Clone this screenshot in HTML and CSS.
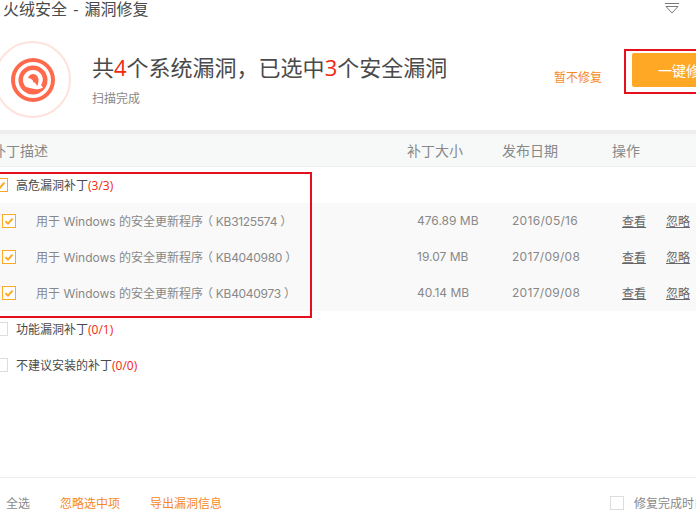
FILE: index.html
```html
<!DOCTYPE html>
<html lang="zh-CN">
<head>
  <meta charset="UTF-8" />
  <title>火绒安全 - 漏洞修复</title>
  <link rel="stylesheet" href="styles.css">
</head>
<body>
  <div class="app">
    <div class="titlebar">
      <span class="app-title">火绒安全 - 漏洞修复</span>
      <svg class="menu-icon" width="16" height="12" viewBox="0 0 16 12">
        <path d="M1 1.5H15" stroke="#777" fill="none"/>
        <path d="M2 4.5H14L8 11Z" stroke="#777" fill="none"/>
      </svg>
    </div>

    <div class="summary">
      <div class="logo">
        <svg width="44" height="44" viewBox="0 0 44 44">
          <circle cx="22" cy="22" r="22" fill="#ff6a4d"/>
          <circle cx="22" cy="22" r="18" fill="#fff"/>
          <circle cx="22" cy="22" r="14.5" fill="#ff6a4d"/>
          <path d="M22 12C16 12 12 16.500 12 22C12 25 13.500 27.500 15 29L21 30.500C25 31.500 29 31.500 32 29.500L30 27C32.500 24 32.500 18.500 29.500 15.500C27.500 13 25 12 22 12Z" fill="#fff"/>
          <path d="M17 20C18 17 20 16 22 16C25.500 16 27.500 19 27.500 22C27.500 24.500 27 26.500 26 28C25 25.500 24 24.500 22 24C22.500 22 20 20.500 17 20Z" fill="#ff6a4d"/>
        </svg>
      </div>
      <div class="summary-text">
        <h1>共<em>4</em>个系统漏洞，已选中<em>3</em>个安全漏洞</h1>
        <p>扫描完成</p>
      </div>
      <a class="skip-link">暂不修复</a>
      <button class="fix-btn">一键修复</button>
      <div class="mark mark-btn"></div>
    </div>

    <div class="table-head">
      <span class="col-name">补丁描述</span>
      <span class="col-size">补丁大小</span>
      <span class="col-date">发布日期</span>
      <span class="col-ops">操作</span>
    </div>

    <div class="list">
      <div class="group">
        <span class="check on"></span>
        <span class="group-name">高危漏洞补丁<em>(3/3)</em></span>
      </div>
      <div class="patches">
        <div class="patch">
          <span class="check on"></span>
          <span class="patch-name">用于 Windows 的安全更新程序<span class="kb">（ KB3125574 ）</span></span>
          <span class="patch-size">476.89 MB</span>
          <span class="patch-date">2016/05/16</span>
          <a class="patch-link">查看</a>
          <a class="patch-link">忽略</a>
        </div>
        <div class="patch">
          <span class="check on"></span>
          <span class="patch-name">用于 Windows 的安全更新程序<span class="kb">（ KB4040980 ）</span></span>
          <span class="patch-size">19.07 MB</span>
          <span class="patch-date">2017/09/08</span>
          <a class="patch-link">查看</a>
          <a class="patch-link">忽略</a>
        </div>
        <div class="patch">
          <span class="check on"></span>
          <span class="patch-name">用于 Windows 的安全更新程序<span class="kb">（ KB4040973 ）</span></span>
          <span class="patch-size">40.14 MB</span>
          <span class="patch-date">2017/09/08</span>
          <a class="patch-link">查看</a>
          <a class="patch-link">忽略</a>
        </div>
      </div>
      <div class="group">
        <span class="check"></span>
        <span class="group-name">功能漏洞补丁<em>(0/1)</em></span>
      </div>
      <div class="group">
        <span class="check"></span>
        <span class="group-name">不建议安装的补丁<em>(0/0)</em></span>
      </div>
      <div class="mark mark-list"></div>
    </div>

    <div class="footer">
      <a class="foot-all">全选</a>
      <a class="foot-link">忽略选中项</a>
      <a class="foot-link">导出漏洞信息</a>
      <span class="check foot-check"></span>
      <span class="foot-note">修复完成时自动关机</span>
    </div>
  </div>
</body>
</html>
```

FILE: styles.css
```css
* {
  margin: 0;
  padding: 0;
  box-sizing: border-box;
}

html, body {
  height: 522px;
  overflow: hidden;
  background: #fff;
}

body {
  font-family: "Open Sans", "Noto Sans CJK SC", sans-serif;
  font-size: 12px;
  color: #666;
}

em {
  font-style: normal;
  color: #f0280f;
}

.app {
  position: relative;
  width: 780px;
  height: 522px;
  margin-left: -8px;
  display: flex;
  flex-direction: column;
}

.titlebar {
  height: 18px;
  display: flex;
  align-items: center;
  justify-content: space-between;
  padding: 0 0 0 11px;
}

.app-title {
  font-size: 16px;
  line-height: 16px;
  word-spacing: 2px;
  color: #4a4a4a;
}

.menu-icon {
  margin-right: 92px;
  margin-top: -2px;
}

.summary {
  position: relative;
  height: 112px;
  display: flex;
  align-items: flex-start;
}

.logo {
  width: 77px;
  height: 77px;
  margin: 23px 0 0 2px;
  border: 2px solid #ffe2dc;
  border-radius: 50%;
  display: flex;
  align-items: center;
  justify-content: center;
}

.summary-text {
  width: 462px;
  margin: 33px 0 0 21px;
}

.summary-text h1 {
  font-size: 22px;
  line-height: 32px;
  font-weight: 400;
  color: #4a4a4a;
}

.summary-text p {
  margin-top: 8px;
  font-size: 12px;
  line-height: 16px;
  color: #888;
}

.skip-link {
  margin-top: 52px;
  font-size: 12px;
  line-height: 16px;
  color: #f5891f;
}

.fix-btn {
  width: 108px;
  height: 34px;
  margin: 35px 0 0 30px;
  border: none;
  border-radius: 2px;
  background: #ffa826;
  color: #fff;
  font-family: inherit;
  font-size: 14px;
}

.mark {
  position: absolute;
  border: 2px solid #e60f1e;
}

.mark-btn {
  left: 632px;
  top: 31px;
  width: 200px;
  height: 45px;
}

.table-head {
  position: relative;
  height: 37px;
  border-top: 4px solid #eeeeee;
  border-bottom: 1px solid #eeeeee;
  background: #f7f9f9;
  color: #888;
  font-size: 14px;
  line-height: 34px;
}

.table-head span {
  position: absolute;
  top: 0;
}

.col-name { left: 0; }
.col-size { left: 415px; }
.col-date { left: 510px; }
.col-ops { left: 620px; }

.list {
  position: relative;
  flex: 1;
}

.group {
  height: 36px;
  display: flex;
  align-items: center;
  padding-left: 2px;
  color: #4a4a4a;
}

.group-name {
  margin-left: 8px;
}

.check {
  flex: none;
  width: 14px;
  height: 14px;
  border: 1px solid #ddd;
  background: #fff;
}

.check.on {
  border-color: #ffa826;
  background: #fff url("data:image/svg+xml,%3Csvg xmlns='http://www.w3.org/2000/svg' width='12' height='12'%3E%3Cpath d='M2.5 6.2L5 8.6L9.5 3.6' stroke='%23ffa826' stroke-width='2' fill='none'/%3E%3C/svg%3E") center no-repeat;
}

.patches {
  background: #f9f9f9;
}

.patch {
  height: 36px;
  display: flex;
  align-items: center;
  padding-left: 10px;
  color: #888;
  font-family: Inter, "Noto Sans CJK SC", sans-serif;
}

.patch-name { width: 381px; margin-left: 20px; padding-bottom: 1px; flex: none; }
.patch-size { width: 95px; padding-bottom: 1px; flex: none; }
.patch-date { width: 110px; padding-bottom: 1px; letter-spacing: 0.3px; flex: none; }

.kb {
  margin-left: -2px;
  letter-spacing: -0.3px;
}

.patch-link {
  width: 44px;
  padding-bottom: 2px;
  flex: none;
  color: #666;
  text-decoration: underline;
}

.mark-list {
  left: 0;
  top: 5px;
  width: 320px;
  height: 146px;
}

.footer {
  height: 45px;
  border-top: 1px solid #eeeeee;
  display: flex;
  align-items: center;
  padding: 6px 0 0 14px;
}

.foot-all { width: 54px; color: #888; }
.foot-link { width: 90px; color: #f5891f; }
.foot-check { margin-left: 370px; }
.foot-note { margin-left: 10px; color: #888; white-space: nowrap; }
```
